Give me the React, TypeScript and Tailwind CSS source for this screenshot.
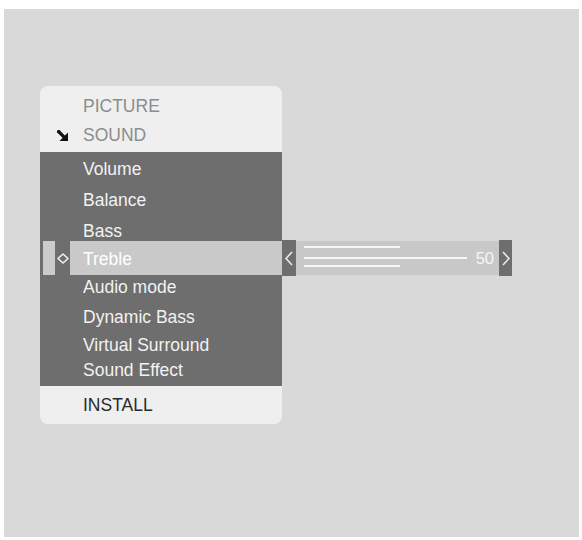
import React from 'react';

interface SoundItem {
  label: string;
  rowClass: string;
}

const soundItems: SoundItem[] = [
  { label: 'Volume', rowClass: 'h-[18px]' },
  { label: 'Balance', rowClass: 'h-[44px]' },
  { label: 'Bass', rowClass: 'h-[19px]' },
  { label: 'Treble', rowClass: 'h-[34px]' },
  { label: 'Audio mode', rowClass: 'h-[25px]' },
  { label: 'Dynamic Bass', rowClass: 'h-[35px]' },
  { label: 'Virtual Surround', rowClass: 'h-[20px]' },
  { label: 'Sound Effect', rowClass: 'h-[31px]' },
];

const SELECTED = 'Treble';

const ArrowDownRight: React.FC = () => (
  <svg width="11" height="11" viewBox="0 0 11 11">
    <path d="M1.5 1.5 L6.5 6.5" stroke="#111" strokeWidth="3.2" strokeLinecap="square" />
    <polygon points="11,2.5 11,11 2.5,11" fill="#111" />
  </svg>
);

const Diamond: React.FC = () => (
  <svg width="12" height="11" viewBox="0 0 12 11">
    <polygon points="6,1 11,5.5 6,10 1,5.5" fill="none" stroke="#f0f0f0" strokeWidth="1.6" strokeLinejoin="round" />
  </svg>
);

const Chevron: React.FC<{ dir: 'left' | 'right' }> = ({ dir }) => (
  <svg width="8" height="15" viewBox="0 0 8 15">
    <polyline
      points={dir === 'left' ? '7,1 1,7.5 7,14' : '1,1 7,7.5 1,14'}
      fill="none"
      stroke="#ececec"
      strokeWidth="1.6"
    />
  </svg>
);

const TrebleSlider: React.FC<{ value: number }> = ({ value }) => (
  <div className="mt-[154px] flex h-[36px]">
    <div className="flex w-[14px] items-center justify-center bg-[#6e6e6e]">
      <Chevron dir="left" />
    </div>
    <div className="my-[1px] flex w-[203px] flex-col bg-[#c8c8c8] pl-[8px] pr-[5px] pt-[5px]">
      <div className="h-[2px] w-[96px] bg-[#f6f6f6]" />
      <div className="mt-[3px] flex h-[14px] items-center">
        <div className="h-[2px] w-[163px] bg-[#f6f6f6]" />
        <span className="ml-auto text-[16.5px] leading-none text-[#f6f6f6]">{value}</span>
      </div>
      <div className="h-[2px] w-[96px] bg-[#f6f6f6]" />
    </div>
    <div className="flex w-[13px] items-center justify-center bg-[#6e6e6e]">
      <Chevron dir="right" />
    </div>
  </div>
);

const App: React.FC = () => {
  return (
    <div className="min-h-screen bg-white pl-[4px] pt-[9px] font-['Liberation_Sans',Arial,sans-serif]">
      <div className="flex h-[528px] w-[575px] items-start bg-[#d9d9d9] pl-[36px] pt-[77px]">
        <div className="w-[242px] overflow-hidden rounded-[8px] bg-[#efefef] text-[17.5px]">
          <div className="pb-[2px] pt-[6px] text-[#8c8c8c]">
            <div className="flex h-[28px] items-center pl-[43px]">PICTURE</div>
            <div className="flex h-[30px] items-center">
              <div className="w-[43px] shrink-0 pl-[17px]">
                <ArrowDownRight />
              </div>
              SOUND
            </div>
          </div>

          <div className="bg-[#6e6e6e] pt-[8px] text-[#f2f2f2]">
            {soundItems.map((item) =>
              item.label === SELECTED ? (
                <div key={item.label} className={`flex ${item.rowClass}`}>
                  <div className="ml-[3px] w-[12px] bg-[#cbcbcb]" />
                  <div className="flex w-[15px] items-center justify-center">
                    <Diamond />
                  </div>
                  <div className="flex flex-1 items-center bg-[#c9c9c9] pl-[13px] pt-[3px] text-white">
                    {item.label}
                  </div>
                </div>
              ) : (
                <div key={item.label} className={`flex items-center pl-[43px] ${item.rowClass}`}>
                  {item.label}
                </div>
              )
            )}
          </div>

          <div className="flex h-[38px] items-center pl-[43px] text-[#2b2b2b]">INSTALL</div>
        </div>

        <TrebleSlider value={50} />
      </div>
    </div>
  );
};

export default App;
